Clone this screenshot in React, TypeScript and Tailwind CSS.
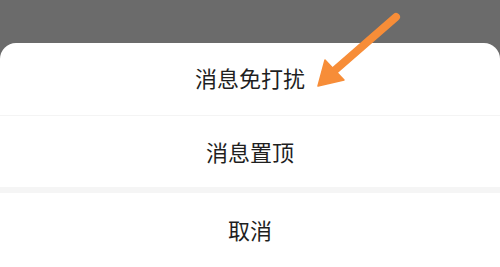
import React from "react";

export default function App() {
  const font = { fontFamily: '"Noto Sans CJK SC", "Noto Sans", sans-serif' };
  return (
    <div className="relative w-[500px] h-[267px] overflow-hidden bg-[#6b6b6b]" style={font}>
      <div className="h-[43px]" />
      <div className="bg-white rounded-t-[16px] flex flex-col">
        <div className="h-[72px] pb-[4px] flex items-center justify-center text-[22px] leading-none text-[#1f1f1f]">消息免打扰</div>
        <div className="h-px bg-[#f4f4f4]" />
        <div className="h-[71px] pb-[2px] flex items-center justify-center text-[22px] leading-none text-[#1f1f1f]">消息置顶</div>
        <div className="h-[6px] bg-[#f5f5f5]" />
        <div className="h-[76px] pb-[4px] flex items-center justify-center text-[22px] leading-none text-[#1f1f1f]">取消</div>
      </div>
      <svg className="absolute left-0 top-0" width="500" height="267" viewBox="0 0 500 267">
        <line x1="396" y1="17" x2="334" y2="71" stroke="#f78d38" strokeWidth="8" strokeLinecap="round" />
        <polygon points="318,86 325,60 344,80" fill="#f78d38" stroke="#f78d38" strokeWidth="1.5" strokeLinejoin="round" />
      </svg>
    </div>
  );
}
